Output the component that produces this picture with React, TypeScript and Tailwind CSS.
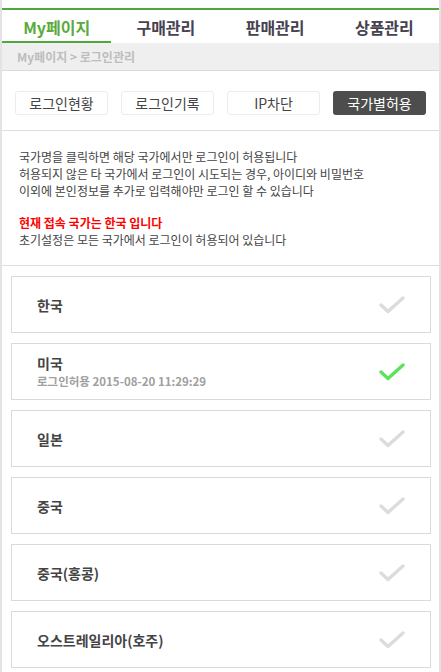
import React from 'react';

const tabs = ['My페이지', '구매관리', '판매관리', '상품관리'];
const subTabs = ['로그인현황', '로그인기록', 'IP차단', '국가별허용'];

type Country = { name: string; allowed?: string };

const countries: Country[] = [
  { name: '한국' },
  { name: '미국', allowed: '2015-08-20 11:29:29' },
  { name: '일본' },
  { name: '중국' },
  { name: '중국(홍콩)' },
  { name: '오스트레일리아(호주)' },
];

const Check = ({ on }: { on: boolean }) => (
  <svg width="26" height="20" viewBox="0 0 26 20" fill="none">
    <polyline
      points="2,10 9,16.5 24,3"
      stroke={on ? '#5be35b' : '#dcdcdc'}
      strokeWidth="3.4"
      strokeLinecap="round"
      strokeLinejoin="round"
    />
  </svg>
);

const App: React.FC = () => {
  return (
    <div
      className="w-[441px] min-h-[672px] bg-white border-x-2 border-[#e3e3e3] text-[#444]"
      style={{ fontFamily: '"Noto Sans CJK KR", "Noto Sans", sans-serif' }}
    >
      {/* --- TOP TABS --- */}
      <div className="pt-2">
        <div className="border-t-2 border-[#4ea83a] grid grid-cols-4 h-[35px]">
          {tabs.map((t, i) => (
            <div
              key={t}
              className={
                i === 0
                  ? 'flex items-center justify-center pt-[2px] text-[16px] font-bold text-[#5aab3c] border-b-2 border-[#4ea83a]'
                  : 'flex items-center justify-center text-[16px] font-bold text-[#474250]'
              }
            >
              {t}
            </div>
          ))}
        </div>
      </div>

      {/* --- BREADCRUMB --- */}
      <div className="h-[28px] bg-[#efefef] border-b border-[#dadada] flex items-center px-[15px] text-[12px] font-bold text-[#bdbdbd]">
        My페이지 &gt; 로그인관리
      </div>

      {/* --- SUB TABS --- */}
      <div className="flex justify-between px-[13px] pt-[20px] pb-[15px] border-b border-[#dedede]">
        {subTabs.map((t, i) => (
          <div
            key={t}
            className={
              i === 3
                ? 'w-[93px] h-[24px] rounded-[3px] bg-[#4d4d4d] text-white text-[14px] flex items-center justify-center'
                : 'w-[93px] h-[24px] rounded-[3px] border border-[#ececec] text-[14px] text-[#444] flex items-center justify-center'
            }
          >
            {t}
          </div>
        ))}
      </div>

      {/* --- NOTICE --- */}
      <div className="px-[17px] pt-[17px] pb-[17px] border-b border-[#dedede] text-[12px] leading-[17px] text-[#444]">
        <p>국가명을 클릭하면 해당 국가에서만 로그인이 허용됩니다</p>
        <p>허용되지 않은 타 국가에서 로그인이 시도되는 경우, 아이디와 비밀번호</p>
        <p>이외에 본인정보를 추가로 입력해야만 로그인 할 수 있습니다</p>
        <p className="mt-[15px] font-bold text-[#ff0000]">현재 접속 국가는 한국 입니다</p>
        <p>초기설정은 모든 국가에서 로그인이 허용되어 있습니다</p>
      </div>

      {/* --- COUNTRY LIST --- */}
      <div className="pl-[9px] pr-[8px] pt-[10px] flex flex-col gap-[10px]">
        {countries.map((c) => (
          <div
            key={c.name}
            className="h-[57px] border border-[#dadada] flex items-center justify-between pl-[25px] pr-[25px]"
          >
            <div className="flex flex-col">
              <span className="text-[14px] font-bold text-[#444] leading-[18px]">{c.name}</span>
              {c.allowed && (
                <span className="text-[11.5px] font-bold text-[#a0a0a0] leading-[16px] mt-[1px]">
                  로그인허용 {c.allowed}
                </span>
              )}
            </div>
            <Check on={!!c.allowed} />
          </div>
        ))}
      </div>
    </div>
  );
};

export default App;
